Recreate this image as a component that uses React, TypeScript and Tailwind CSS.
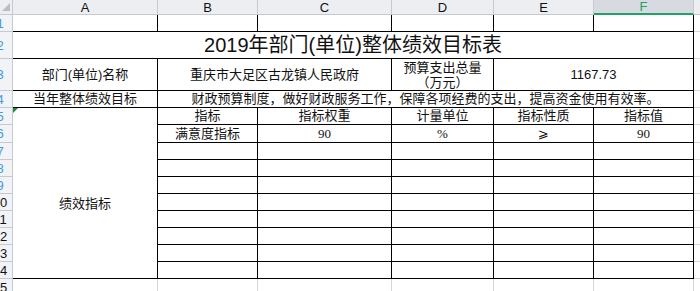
import type { ReactNode } from 'react';

const font = 'font-["Liberation_Sans","Noto_Sans_CJK_SC",sans-serif]';
const serif = 'font-["Liberation_Serif","Noto_Sans_CJK_SC",serif]';

const ink = 'border-r border-b border-black';
const grid = 'border-r border-b border-[#d3d7df]';

function Cell({ className = '', children }: { className?: string; children?: ReactNode }) {
 return (
  <div className={`flex items-center justify-center overflow-hidden whitespace-nowrap text-[13px] text-[#111] ${className}`}>
   {children}
  </div>
 );
}

function RowHead({ n }: { n: number }) {
 return (
  <div className="flex items-center overflow-hidden border-r border-b border-[#c5c9d2] bg-[#f1f3f6]">
   <span className={`ml-[-13px] w-[26px] shrink-0 text-center text-[13px] leading-none ${n < 10 ? 'text-[#3d9be0]' : 'text-[#111]'}`}>
    {n}
   </span>
  </div>
 );
}

function ColHead({ label, active = false }: { label: string; active?: boolean }) {
 return (
  <div
   className={`flex items-center justify-center border-r border-[#c5c9d2] text-[13px] leading-none ${
    active
     ? 'bg-[#d7dae1] text-[#25a15c] border-b-2 border-b-[#21a366]'
     : 'bg-[#eceef2] text-[#111] border-b border-b-[#c5c9d2]'
   }`}
  >
   {label}
  </div>
 );
}

const metricHead = ['指标', '指标权重', '计量单位', '指标性质', '指标值'];

export default function App() {
 const emptyRows = [7, 8, 9, 10, 11, 12, 13, 14];

 return (
  <div className={`h-[291px] w-[700px] overflow-hidden bg-white ${font}`}>
   <div className="grid grid-cols-[13px_145px_100px_134px_102px_100px_100px_1fr] grid-rows-[15px_17px_27px_32px_17px_17px_18px_17px_17px_17px_17px_17px_17px_17px_17px_17px]">
    {/* column letters */}
    <div className="flex items-end justify-end border-r border-b border-[#c5c9d2] bg-[#eceef2] pb-[3px] pr-[2px]">
     <svg width="8" height="8" viewBox="0 0 8 8">
      <path d="M8 0 L8 8 L0 8 Z" fill="#b9bdc6" />
     </svg>
    </div>
    <ColHead label="A" />
    <ColHead label="B" />
    <ColHead label="C" />
    <ColHead label="D" />
    <ColHead label="E" />
    <ColHead label="F" active />
    <div className="border-b border-[#c5c9d2] bg-[#eceef2]" />

    {/* row 1 */}
    <RowHead n={1} />
    <Cell className={ink} />
    <Cell className={ink} />
    <Cell className={ink} />
    <Cell className={ink} />
    <Cell className={ink} />
    <Cell className={ink} />
    <div className="border-b border-[#d3d7df]" />

    {/* row 2: title */}
    <RowHead n={2} />
    <Cell className={`col-span-6 text-[20px] text-[#1d1d1d] ${ink}`}>2019年部门(单位)整体绩效目标表</Cell>
    <div className="border-b border-[#d3d7df]" />

    {/* row 3 */}
    <RowHead n={3} />
    <Cell className={ink}>部门(单位)名称</Cell>
    <Cell className={`col-span-2 ${ink}`}>重庆市大足区古龙镇人民政府</Cell>
    <Cell className={`flex-col leading-[15px] ${ink}`}>
     <span>预算支出总量</span>
     <span>（万元）</span>
    </Cell>
    <Cell className={`col-span-2 ${ink}`}>1167.73</Cell>
    <div className="border-b border-[#d3d7df]" />

    {/* row 4 */}
    <RowHead n={4} />
    <Cell className={ink}>当年整体绩效目标</Cell>
    <Cell className={`col-span-5 ${ink}`}>财政预算制度，做好财政服务工作，保障各项经费的支出，提高资金使用有效率。</Cell>
    <div className="border-b border-[#d3d7df]" />

    {/* row 5 */}
    <RowHead n={5} />
    <div className={`row-span-10 flex flex-col ${ink}`}>
     <svg width="5" height="5" viewBox="0 0 5 5" className="shrink-0">
      <path d="M0 0 L5 0 L0 5 Z" fill="#1f8a3a" />
     </svg>
     <div className="flex flex-1 items-center justify-center pt-[16px] text-[13px] text-[#111]">绩效指标</div>
    </div>
    {metricHead.map((h) => (
     <Cell key={h} className={ink}>
      {h}
     </Cell>
    ))}
    <div className="border-b border-[#d3d7df]" />

    {/* row 6 */}
    <RowHead n={6} />
    <Cell className={ink}>满意度指标</Cell>
    <Cell className={`${serif} text-[#1c2758] ${ink}`}>90</Cell>
    <Cell className={`${serif} text-[#1c2758] ${ink}`}>%</Cell>
    <Cell className={`font-["DejaVu_Sans",serif] text-[12px] text-[#1c2758] ${ink}`}>⩾</Cell>
    <Cell className={`${serif} text-[#1c2758] ${ink}`}>90</Cell>
    <div className="border-b border-[#d3d7df]" />

    {/* rows 7-14 */}
    {emptyRows.map((n) => (
     <div key={n} className="contents">
      <RowHead n={n} />
      <Cell className={ink} />
      <Cell className={ink} />
      <Cell className={ink} />
      <Cell className={ink} />
      <Cell className={ink} />
      <div className="border-b border-[#d3d7df]" />
     </div>
    ))}

    {/* row 15 */}
    <RowHead n={15} />
    <Cell className={grid} />
    <Cell className={grid} />
    <Cell className={grid} />
    <Cell className={grid} />
    <Cell className={grid} />
    <Cell className={grid} />
    <div className="border-b border-[#d3d7df]" />
   </div>
  </div>
 );
}
